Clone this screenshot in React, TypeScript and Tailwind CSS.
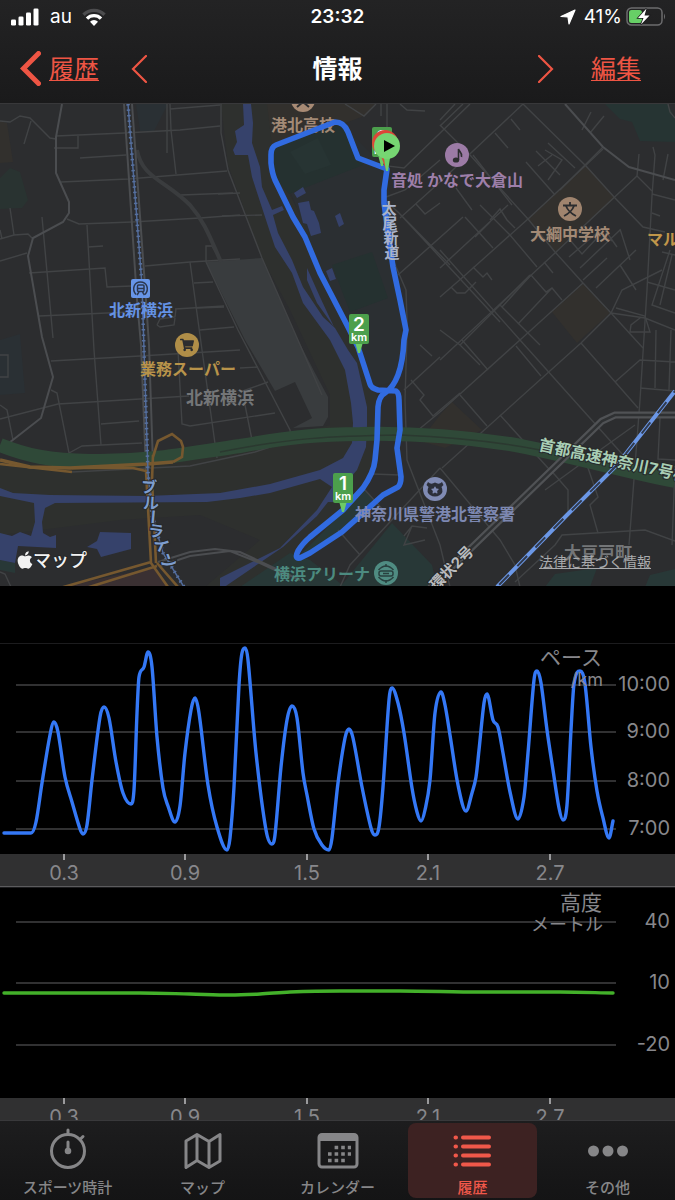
import React from 'react';
import { FaApple, FaShoppingCart, FaStar } from 'react-icons/fa';

type Point = [number, number];

const PACE: Point[] = [
  [4, 833], [18, 833], [31, 833], [36, 822], [42, 783], [50, 735], [54, 722], [58, 732], [65, 777], [72, 802],
  [80, 829], [83, 834], [87, 825], [92, 780], [100, 717], [104, 707], [109, 718], [116, 762], [123, 793],
  [131, 804], [134, 790], [137, 713], [139, 677], [144, 667], [148, 652], [152, 667], [157, 737], [163, 788],
  [168, 806], [175, 822], [180, 806], [185, 753], [191, 710], [195, 698], [199, 713], [208, 785], [217, 827],
  [227, 850], [230, 838], [234, 787], [239, 685], [242, 653], [245, 648], [248, 660], [256, 753], [266, 830],
  [272, 844], [275, 835], [281, 767], [287, 720], [292, 706], [297, 718], [303, 773], [307, 795], [314, 829],
  [322, 845], [329, 850], [332, 838], [338, 783], [345, 738], [349, 729], [353, 738], [362, 787], [371, 828],
  [375, 835], [379, 827], [383, 787], [389, 700], [392, 688], [398, 703], [404, 733], [412, 788], [417, 812],
  [421, 821], [425, 810], [430, 780], [435, 713], [441, 692], [445, 705], [450, 735], [458, 785], [466, 811],
  [472, 793], [476, 777], [479, 750], [484, 703], [487, 694], [493, 720], [498, 727], [503, 753], [510, 792],
  [518, 819], [524, 797], [528, 753], [534, 680], [537, 671], [541, 683], [547, 730], [553, 770], [559, 808],
  [563, 820], [567, 805], [571, 730], [574, 684], [580, 671], [585, 684], [591, 747], [597, 791], [603, 818],
  [609, 838], [613, 821],
].map(([x, y]) => [x, y - 644] as Point);

const ALTITUDE: Point[] = [
  [4, 105], [80, 105], [140, 105], [190, 106], [230, 107], [260, 106], [290, 104], [340, 103], [400, 103],
  [480, 104], [560, 104], [613, 105],
];

const TICKS = [
  { x: 64, label: '0.3' },
  { x: 185, label: '0.9' },
  { x: 307, label: '1.5' },
  { x: 428, label: '2.1' },
  { x: 550, label: '2.7' },
];

// smooth curve that stays flat at every peak and valley
const toCurve = (pts: Point[]) => {
  const slope = (a: Point, b: Point) => (b[1] - a[1]) / (b[0] - a[0]);
  const tangents = pts.map((p, i) => {
    if (i === 0) return 0;
    if (i === pts.length - 1) return slope(pts[i - 1], p);
    const before = slope(pts[i - 1], p);
    const after = slope(p, pts[i + 1]);
    if (before * after <= 0) return 0;
    const mean = slope(pts[i - 1], pts[i + 1]);
    return Math.sign(mean) * Math.min(Math.abs(mean), 3 * Math.abs(before), 3 * Math.abs(after));
  });
  let d = `M${pts[0][0]} ${pts[0][1]}`;
  for (let i = 0; i < pts.length - 1; i++) {
    const [x0, y0] = pts[i];
    const [x1, y1] = pts[i + 1];
    const h = (x1 - x0) / 3;
    d += `C${x0 + h} ${y0 + h * tangents[i]} ${x1 - h} ${y1 - h * tangents[i + 1]} ${x1} ${y1}`;
  }
  return d;
};

interface ChartProps {
  title: string;
  unit: string;
  color: string;
  points: Point[];
  grid: { y: number; label: string }[];
  titleY: number;
}

const Chart: React.FC<ChartProps> = ({ title, unit, color, points, grid, titleY }) => (
  <section aria-label={title}>
    <svg viewBox="0 0 675 210" className="block w-full border-t border-[#1c1c1e]">
      {grid.map((g) => (
        <g key={g.label}>
          <path d={`M16 ${g.y}H616`} stroke="#626264" strokeWidth="1.2" />
          <text x="670" y={g.y + 6} textAnchor="end" className="fill-[#87878b] text-[20px]">{g.label}</text>
        </g>
      ))}
      <path d={toCurve(points)} fill="none" stroke={color} strokeWidth="3.4" strokeLinejoin="round" strokeLinecap="round" />
      <text x="602" y={titleY} textAnchor="end" className="fill-[#87878b] text-[21px]">{title}</text>
      <text x="603" y={titleY + 21} textAnchor="end" className="fill-[#87878b] text-[18px]">{unit}</text>
    </svg>
    <svg viewBox="0 0 675 32" className="block w-full border-b border-[#5c5c5e] bg-[#303031]">
      {TICKS.map((t) => (
        <g key={t.label}>
          <path d={`M${t.x} 0V6`} stroke="#9a9a9c" strokeWidth="2" />
          <text x={t.x} y="26" textAnchor="middle" className="fill-[#87878b] text-[20px]">{t.label}</text>
        </g>
      ))}
    </svg>
  </section>
);

const MINOR_ROADS = [
  // west side
  'M0 121L10 122L20 116L30 118L50 138L56 139',
  'M31 121L24 144',
  'M56 136L124 133L180 130L220 126',
  'M54 148H78V136',
  'M80 158L126 155',
  'M61 182L128 179L227 171',
  'M67 219L79 224L132 222L200 218L240 215',
  'M0 261L27 253M0 239L14 235L28 234L33 239M10 208L14 235M0 230L2 239',
  'M42 217L53 338M87 225L94 350L101 445',
  'M29 273L105 268L107 287L132 286M88 247L103 246',
  'M39 316L130 312M145 266L190 262L240 259',
  'M167 104V153M170 104L171 130L176 174M170 109L220 105',
  'M221 104V133L228 170L262 258L322 395',
  'M181 195L233 193',
  'M190 262L202 350L217 458M194 283L213 282M196 308L224 307M200 330L234 327',
  'M206 262V246H212L221 262',
  'M206 262L238 330L290 430L291 440L255 452L190 466L72 472',
  'M157 325L160 319L175 317L176 309M175 309L224 306',
  'M157 325L160 327L174 325L175 318',
  'M51 361L140 356L240 350M0 419L58 404L140 399L189 396',
  'M51 390L57 393L69 453L82 446L142 443M101 424L139 421',
  'M0 405L7 410L13 440M178 350L182 424L190 426L275 413M0 355H8V377H0',
  'M222 216L262 215M218 194L240 193M240 368L258 367M240 392L268 382',
  'M0 572L5 574L11 587M245 405L254 450',
  // centre
  'M381 116V104M387 104V166L404 168L470 104',
  'M345 104L364 116L376 104M400 104L407 110L425 111',
  'M382 197L399 213L500 322M399 213L450 265M416 204L425 214L440 203',
  'M386 197L405 190L440 160M398 275L463 217M407 333V320L406 290L393 260',
  'M407 333L405 400L407 460L440 545L450 587',
  'M404 390L440 357M411 380L424 395L420 400L433 416L460 393',
  'M420 345L432 356M372 474L400 475M365 490L385 512',
  'M338 530L360 555M440 468L350 565L340 587M406 440L440 412',
  'M440 468L500 540L515 565L520 587M404 536L412 526L427 528M412 526L404 545L425 540',
  // east grid
  'M523 104L440 182L400 218',
  'M523 104L586 166L615 198L643 227L665 232',
  'M440 125L470 155L528 219L555 252L583 283L611 313L643 348',
  'M603 149L585 166L528 219L463 277L440 297',
  'M637 176L555 253L500 304L440 360',
  'M583 283L520 340L440 412M662 270L622 290L611 313L581 343L442 468',
  'M440 250L520 340L623 455M581 343L638 408',
  'M462 340L488 370M460 395L487 426M500 415L548 468M516 346L541 376',
  'M465 217L493 248M456 188L472 210M480 205L510 235L537 267M508 205L440 268',
  'M473 155L512 205M495 133L508 148M511 119L520 130M455 104L440 120M463 104L440 126',
  'M526 162L555 195M536 151L560 175M548 143L575 168M538 166L552 155M548 180L562 160L545 150',
  'M490 220L500 209L507 220L515 228M475 237L490 222',
  'M473 267L483 277L487 273L492 280M451 287L457 293L465 293L476 282',
  'M502 307L531 275L546 292L552 288L562 300M518 324L552 288',
  'M544 262L553 273M570 240L582 254L597 238M607 258L583 280M620 265L636 290',
  'M580 268L620 230M596 288L636 250M569 257L598 232L612 241M605 230L617 247M620 229L630 260',
  'M603 147L560 190M582 130L591 112M590 133L604 116M637 176L639 154M637 176L652 191',
  'M653 147L655 155L652 196L647 290L640 400L629 545M652 194L675 200M663 180L668 154',
  'M670 250L652 305L675 313M662 252L675 255M672 255L660 305M652 213L660 216',
  'M647 282L675 290M611 313L645 318L675 330M616 308L645 316L650 332H630L631 325L640 318',
  'M656 330L655 388M671 330L669 390M640 388L675 391M615 382L640 360L675 362M668 104L670 112L675 118',
  'M548 468L555 475L568 490V515M587 465L598 497L590 505L598 533M545 490L600 450L635 425',
  'M515 582L555 545L562 535L645 530L675 541M660 418L658 459L675 460M675 466L672 545',
  'M500 305L540 345M530 275L505 300L460 345M440 330L460 345L480 365',
];

const MAJOR_ROADS = [
  'M62 104L56 137V173L69 202V213L63 222L33 238L28 256L42 337L53 377L41 418L0 450',
  'M565 104L603 147L629 167L675 180',
];

const LINE_LABEL = [
  { c: 'ブ', x: 149, y: 487, r: 3 },
  { c: 'ル', x: 151, y: 503, r: 3 },
  { c: 'ー', x: 153, y: 517, r: 95 },
  { c: 'ラ', x: 156, y: 531, r: 8 },
  { c: 'イ', x: 161, y: 545, r: 24 },
  { c: 'ン', x: 169, y: 561, r: 30 },
];

const ROAD_LABEL = [
  { c: '太', x: 389, y: 208 },
  { c: '尾', x: 390, y: 223 },
  { c: '新', x: 391, y: 237 },
  { c: '道', x: 392, y: 252 },
];

const KmPin: React.FC<{ x: number; y: number; n: number }> = ({ x, y, n }) => (
  <g>
    <path d={`M${x - 4} ${y - 11}H${x + 4}L${x + 1} ${y}H${x - 1}Z`} fill="#6ccb66" />
    <rect x={x - 10} y={y - 39} width="20" height="30" rx="2" fill="#4c9f4c" />
    <text x={x} y={y - 22} textAnchor="middle" className="fill-white text-[19px] font-semibold">{n}</text>
    <text x={x} y={y - 12} textAnchor="middle" className="fill-white text-[11px] font-semibold">km</text>
  </g>
);

const RouteMap = () => (
  <svg viewBox="0 104 675 482" className="block w-full bg-[#2c2d2f]" role="img" aria-label="マップ">
    <g>
      <path d="M221 104H275L290 195L330 270L356 340L378 400V425L370 475L310 545L240 587H205L260 540L200 515L120 520L0 535V460L80 468L240 452L330 425V395L290 310L262 258L228 165Z" fill="#2e302e" />
      <path d="M0 121L7 123L13 162L0 163ZM267 104H375L364 116L345 123L272 145ZM528 219L586 166L615 198L555 252ZM552 312L583 284L610 313L577 343ZM440 415L452 402L482 430L445 448L420 441Z" fill="#32302d" />
      <path d="M0 178L10 168L20 172L28 200L22 208L0 209Z" fill="#293331" />
      <path d="M136 104H168L154 131H140ZM0 340L20 334L25 393L0 395Z" fill="#2a3034" />
      <path d="M272 148L340 123L387 169L398 270L406 330L398 380L372 388Z" fill="#2b2f32" />
      <path d="M273 148L340 124L348 132L363 165L289 194L275 178Z" fill="#253130" />
      <path d="M290 152L318 138L331 165L305 174Z" fill="#273433" />
      <path d="M332 265L372 252L388 298L350 312Z" fill="#253130" />
      <path d="M605 104H668L675 118V142L640 141L632 122L620 119Z" fill="#263433" />
      <path d="M300 555L365 490L375 502L340 535ZM340 587L392 523L432 565L437 587ZM240 587L290 553L310 560L345 587ZM650 575L675 569V587H645ZM0 560L15 563V573L0 570ZM555 574L597 568L590 587H545Z" fill="#283837" />
      <path d="M60 587L153 568L168 587Z" fill="#3a3032" />
      <path d="M206 262L262 258L298 340L315 373L328 397V417L323 426L293 428L312 418L295 382L275 391L245 340Z" fill="#393c3e" />
    </g>

    <g fill="none" stroke="#414345" strokeWidth="1.4">
      {MINOR_ROADS.map((d) => <path key={d} d={d} />)}
    </g>
    <path d="M137 150C142 178 165 180 190 205C205 222 211 240 221 262" fill="none" stroke="#3a3c3e" strokeWidth="4" />

    <g fill="#36426b">
      <path d="M0 488L13 493L50 495L147 496L220 493L270 484L320 470L343 458L352 443L353 423L351 403L345 370L330 340L303 303L292 273L275 247L267 223L252 177L248 155H235L233 150L237 142L235 131L244 125L243 104H251L253 123L252 143L260 167L262 187L272 210L282 206L284 210L273 215L278 233L292 260L303 287L323 317L335 328L348 350L357 363L367 407V425L366 447L357 470L343 486L335 502H328L317 516L283 547L220 590V578L280 548L317 510L332 487L320 479L270 493L240 498L207 502L55 503L45 508L42 522L43 533L50 537L56 535V548L18 546L15 563L0 560V533L12 536L20 532L31 536L35 522L34 503L0 496Z" />
      <path d="M100 532L131 533V549L101 557L97 549L87 547L97 541Z" />
      <path d="M307 268L320 297L334 327L317 303L307 280ZM294 193L303 187L306 193L297 198ZM298 203L309 201L311 210L314 211L319 223L321 233L311 236L307 224L303 223ZM335 216L340 213L344 224L339 227ZM326 271L332 268L336 279L330 281Z" />
    </g>

    <g fill="none" stroke="#4b4d50" strokeWidth="2">
      {MAJOR_ROADS.map((d) => <path key={d} d={d} />)}
      <path d="M124 104L137 300L141 345L146 470M132 104L146 300L149 345L153 465" />
      <path d="M158 562L190 552L215 549L240 552L300 580M160 566L190 556L230 551L260 563L290 577" />
    </g>

    <path d="M0 445C25 455 50 461 90 461C150 462 190 453 240 446C290 437 320 434 360 434C400 433 450 435 510 444C570 455 610 468 675 481" fill="none" stroke="#2f4938" strokeWidth="14" />
    <path d="M220 452C290 438 330 436 400 435C450 437 500 442 540 450" fill="none" stroke="#2b3930" strokeWidth="1.5" />

    <g fill="none" stroke="#76582f" strokeWidth="2.6">
      <path d="M0 460L30 467L70 468L147 464L173 462" strokeWidth="3.6" />
      <path d="M173 462L182 457L183 447L181 441L172 434L158 441L153 457M0 464L72 472M72 468L133 468L146 471L151 563M153 455L152 480L156 563M151 562L60 588M157 566L86 588M151 563L168 587M157 563L178 587" />
    </g>

    <path d="M675 415H615L602 421L430 588" fill="none" stroke="#505255" strokeWidth="7" />
    <path d="M675 415H615L602 421L430 588" fill="none" stroke="#2f3133" strokeWidth="2.5" />

    <g fill="none">
      <path d="M128 104L142 285L144 350L148 473L152 515L163 553L184 587" stroke="#506a9a" strokeWidth="1.5" />
      <path d="M128 104L142 285L144 350L148 473L152 515L163 553L184 587" stroke="#57719f" strokeWidth="3.5" strokeDasharray="1.5 4" />
      <path d="M675 391L617 465L567 515L497 587" stroke="#6b97e6" strokeWidth="4" />
      <path d="M675 391L617 465L567 515L497 587" stroke="#303a4d" strokeWidth="2" strokeDasharray="14 12" strokeDashoffset="12" />
    </g>

    {/* labels under the track */}
    <g className="text-[16px] font-bold" textAnchor="middle">
      <circle cx="303" cy="100" r="12" fill="#a78a74" />
      <path d="M297 107L303 102L309 107" fill="none" stroke="#2c2d2f" strokeWidth="2" />
      <text x="303" y="131" fill="#a38a76">港北高校</text>
    </g>

    <path
      d="M387 169L358 158L348 132Q344 122 335 122L276 145Q271 147 271 155V163Q272 173 275 180L293 217L305 237L320 273L348 327L358 347L370 384Q371 388 378 390L396 391Q399 393 399 400L400 430L397 448L401 477Q401 484 398 487L383 495L342 532L310 553L300 558Q294 559 298 551Q302 544 310 537L343 510L363 488Q374 472 375 460L377 440L378 407Q379 396 385 393Q393 388 398 375Q403 362 404 340L406 330L400 300L393 267L384 203V190Z"
      fill="none"
      stroke="#316be0"
      strokeWidth="5.6"
      strokeLinejoin="round"
    />

    <g className="text-[16px] font-bold" textAnchor="middle">
      <circle cx="457" cy="155" r="12" fill="#9c7ba6" />
      <ellipse cx="456" cy="160" rx="3.2" ry="2.6" fill="#2c2d2f" />
      <path d="M458.500 160V149C459 152 462.500 152 461.500 157" fill="none" stroke="#2c2d2f" strokeWidth="1.6" />
      <text x="457" y="186" fill="#9e7faa">音処 かなで大倉山</text>
      <circle cx="570" cy="209" r="12" fill="#a0846e" />
      <path d="M570 202V205M563 205.500H577M566 206C568 211 572 214 576 216M574 206C572 211 568 214 564 216" fill="none" stroke="#2c2d2f" strokeWidth="1.8" />
      <text x="570" y="240" fill="#a38a76">大綱中学校</text>
      <text x="647" y="245" fill="#c0964a" textAnchor="start">マル</text>

      <rect x="131" y="279" width="19" height="19" rx="2" fill="#6795e8" />
      <g fill="none" stroke="#2c3850" strokeWidth="1.5">
        <path d="M136 294.500C131.500 289 134 282 140.500 282C147 282 149.500 289 145 294.500" />
        <rect x="137.500" y="285" width="6.500" height="6.500" rx="1" />
        <path d="M137.500 288.500H144M139 292L137 295M142.500 292L144.500 295" />
      </g>
      <text x="141" y="316" fill="#6492e4">北新横浜</text>
      <circle cx="187" cy="345" r="12" fill="#b08e48" />
      <FaShoppingCart x="180" y="338" size={14} color="#2c2d2f" />
      <text x="188" y="375" fill="#b8934a">業務スーパー</text>
      <text x="220" y="404" fill="#747678" className="text-[17px]">北新横浜</text>
      <text x="598" y="559" fill="#747678" className="text-[17px]">大豆戸町</text>

      <circle cx="435" cy="489" r="12" fill="#808bb4" />
      <path d="M428 482Q431 485 435 482.500Q439 485 442 482L443.500 485L441.500 487Q444 492 440 495Q435 498 430 495Q426 492 428.500 487L426.500 485Z" fill="#2c2f3a" />
      <FaStar x="431" y="486" size={8} color="#808bb4" />
      <text x="435" y="520" fill="#7d88b2">神奈川県警港北警察署</text>
      <circle cx="386" cy="573" r="12" fill="#4f8c82" />
      <g fill="none" stroke="#28403f" strokeWidth="1.5">
        <path d="M378.500 570Q386 562 393.500 570M378.500 577Q386 585 393.500 577" />
        <rect x="379" y="571" width="14" height="5" rx="2" />
        <path d="M383 573.500H389M386 564V567M386 580V583" />
      </g>
      <text x="322" y="580" fill="#4c8b80">横浜アリーナ</text>
    </g>

    <g className="text-[15px] font-bold" textAnchor="middle" stroke="#26282a" strokeWidth="2" paintOrder="stroke">
      {ROAD_LABEL.map((l) => (
        <text key={l.c} x={l.x} y={l.y + 6} fill="#a9b3c9" stroke="none">{l.c}</text>
      ))}
      {LINE_LABEL.map((l) => (
        <text key={l.c} x={l.x} y={l.y + 6} fill="#7d9dce" transform={`rotate(${l.r} ${l.x} ${l.y})`} className="text-[16px]">{l.c}</text>
      ))}
      <text x="538" y="450" textAnchor="start" fill="#a9ceb5" transform="rotate(12 538 450)" className="text-[16px]">首都高速神奈川7号横</text>
      <text x="436" y="591" textAnchor="start" fill="#b9bbbd" transform="rotate(-45 436 591)">環状2号</text>
    </g>

    <KmPin x={359} y={353} n={2} />
    <KmPin x={343} y={512} n={1} />
    <KmPin x={382} y={166} n={3} />
    <path d="M381 156L386 170L389 156Z" fill="#d8493c" />
    <circle cx="385" cy="143" r="13" fill="#dd4638" />
    <path d="M384 158H390L388 171H386Z" fill="#6cd06a" />
    <circle cx="387" cy="146" r="13" fill="#76d672" />
    <path d="M384 140V152L395 146Z" fill="#000" />

    <FaApple x="15" y="550" size={20} color="#f2f2f2" />
    <text x="33" y="567" stroke="#26282a" strokeWidth="2" paintOrder="stroke" className="fill-[#f2f2f2] text-[18px] font-medium">マップ</text>
  </svg>
);

const StatusBar = () => (
  <div className="grid h-[34px] grid-cols-3 items-center text-[19px] text-white">
    <div className="flex items-center gap-2 pl-[10px]">
      <svg viewBox="0 0 30 20" className="h-5 w-[30px]" fill="#fff">
        <rect x="1" y="12.500" width="5" height="6" rx="1.3" />
        <rect x="8.500" y="9.500" width="5" height="9" rx="1.3" />
        <rect x="16" y="5.500" width="5" height="13" rx="1.3" />
        <rect x="23.500" y="1.500" width="5" height="17" rx="1.3" />
      </svg>
      <span className="px-[2px]">au</span>
      <svg viewBox="0 0 24 18" className="h-[18px] w-6" fill="none" strokeWidth="3.4">
        <path d="M1.500 6.700A14.800 14.800 0 0 1 22.500 6.700" stroke="#4c4c4e" />
        <path d="M5 10.600A9.800 9.800 0 0 1 19 10.600" stroke="#fff" />
        <path d="M12 18L8 13.800A5.600 5.600 0 0 1 16 13.800Z" fill="#fff" />
      </svg>
    </div>
    <span className="text-center font-semibold">23:32</span>
    <div className="flex items-center justify-end gap-1 pr-[9px]">
      <svg viewBox="0 0 16 16" className="mr-1 h-4 w-4">
        <path d="M15 1L9 15L8 8L1 7.500Z" fill="#fff" stroke="#fff" strokeWidth="1.2" strokeLinejoin="round" />
      </svg>
      <span>41%</span>
      <svg viewBox="0 0 40 20" className="h-5 w-10">
        <rect x="1" y="1" width="35" height="17" rx="4.500" fill="none" stroke="#6c6c6e" strokeWidth="1.500" />
        <path d="M38 6.500Q40 9.500 38 12.500Z" fill="#6c6c6e" />
        <rect x="3" y="3" width="13" height="13" rx="2.500" fill="#67cf66" />
        <path d="M20.500 1.500L12 11H17.500L15 17.500L23.500 8.500H18.500Z" fill="#fff" stroke="#1d1d1e" strokeWidth="1.500" paintOrder="stroke" />
      </svg>
    </div>
  </div>
);

const Header = () => (
  <header className="shrink-0 border-b border-[#38383a] bg-linear-to-b from-[#232324] to-[#1a1a1b]">
    <StatusBar />
    <div className="grid h-[69px] grid-cols-3 items-center text-[25px] text-[#ee5544]">
      <div className="flex items-center gap-8 pl-5">
        <button className="flex items-center gap-2">
          <svg viewBox="0 0 21 35" className="h-[35px] w-[21px]" fill="none" stroke="currentColor" strokeWidth="5" strokeLinecap="round">
            <path d="M18.500 2.500L3.500 17.500L18.500 32.500" />
          </svg>
          <span className="pt-[2px] underline decoration-1 underline-offset-2">履歴</span>
        </button>
        <button aria-label="前へ">
          <svg viewBox="0 0 16 28" className="h-7 w-4" fill="none" stroke="currentColor" strokeWidth="2.200" strokeLinecap="round">
            <path d="M15 1L2 14L15 27" />
          </svg>
        </button>
      </div>
      <h1 className="pt-[2px] text-center font-bold text-white">情報</h1>
      <div className="flex items-center justify-end gap-[37px] pr-[34px]">
        <button aria-label="次へ">
          <svg viewBox="0 0 16 28" className="h-7 w-4" fill="none" stroke="currentColor" strokeWidth="2.200" strokeLinecap="round">
            <path d="M1 1L14 14L1 27" />
          </svg>
        </button>
        <button className="pt-[2px] underline decoration-1 underline-offset-2">編集</button>
      </div>
    </div>
  </header>
);

const TABS = [
  {
    label: 'スポーツ時計',
    icon: (
      <g fill="none" stroke="currentColor" strokeWidth="3" strokeLinecap="round">
        <circle cx="19" cy="24" r="16.500" />
        <path d="M19 3V7M31 12.500L34 9.500M19 15V23" />
        <circle cx="19" cy="24" r="1.800" fill="currentColor" />
      </g>
    ),
  },
  {
    label: 'マップ',
    icon: (
      <path d="M2 14L13 7.500L25 14.500L36 7.500V34L25 40.500L13 33.500L2 40.500ZM13 7.500V33.500M25 14.500V40.500" fill="none" stroke="currentColor" strokeWidth="3" strokeLinejoin="round" />
    ),
  },
  {
    label: 'カレンダー',
    icon: (
      <>
        <rect x="0" y="7.500" width="38" height="32.500" rx="3" fill="none" stroke="currentColor" strokeWidth="3" />
        <path d="M0 8H38V14H0Z" fill="currentColor" />
        <path d="M15.600 20.500H32M9 27H32M9 33.500H26" stroke="currentColor" strokeWidth="3.600" strokeDasharray="3.600 3" />
      </>
    ),
  },
  {
    label: '履歴',
    active: true,
    icon: (
      <g stroke="currentColor" strokeWidth="4" strokeLinecap="round">
        <path d="M9 10.500H35M9 19.500H35M9 28.500H35M9 37.500H35" />
        <path d="M1.500 10.500H2M1.500 19.500H2M1.500 28.500H2M1.500 37.500H2" />
      </g>
    ),
  },
  {
    label: 'その他',
    icon: (
      <g fill="currentColor">
        <circle cx="4.500" cy="24" r="5.500" />
        <circle cx="19" cy="24" r="5.500" />
        <circle cx="33.500" cy="24" r="5.500" />
      </g>
    ),
  },
];

const TabBar = () => (
  <nav className="grid shrink-0 grid-cols-5 border-t border-[#39393b] bg-linear-to-b from-[#1d1d1e] to-[#141415]">
    {TABS.map((tab) => (
      <button
        key={tab.label}
        className={`mx-[3px] my-[2px] flex h-[75px] flex-col items-center justify-between rounded-lg pt-1 pb-[2px] text-[15px] leading-4 font-medium ${tab.active ? 'bg-[#3d2222] text-[#f0584a]' : 'text-[#868688]'}`}
      >
        <svg viewBox="-2 0 42 42" className="h-[42px] w-[42px]">{tab.icon}</svg>
        <span>{tab.label}</span>
      </button>
    ))}
  </nav>
);

const App: React.FC = () => (
  <div className="flex h-screen flex-col bg-black font-['Inter','Noto_Sans_CJK_JP',sans-serif]">
    <Header />
    <main className="min-h-0 flex-1 overflow-y-auto [scrollbar-width:none]">
      <div className="relative mb-[57px]">
        <RouteMap />
        <a href="#legal" className="absolute right-6 bottom-4 text-[14px] leading-4 text-[#a9aaac] underline">法律に基づく情報</a>
      </div>
      <Chart
        title="ペース"
        unit="/km"
        color="#3478f6"
        points={PACE}
        titleY={21}
        grid={[
          { y: 41, label: '10:00' },
          { y: 88, label: '9:00' },
          { y: 137, label: '8:00' },
          { y: 185, label: '7:00' },
        ]}
      />
      <Chart
        title="高度"
        unit="メートル"
        color="#43b02a"
        points={ALTITUDE}
        titleY={22}
        grid={[
          { y: 34, label: '40' },
          { y: 95, label: '10' },
          { y: 157, label: '-20' },
        ]}
      />
    </main>
    <TabBar />
  </div>
);

export default App;
